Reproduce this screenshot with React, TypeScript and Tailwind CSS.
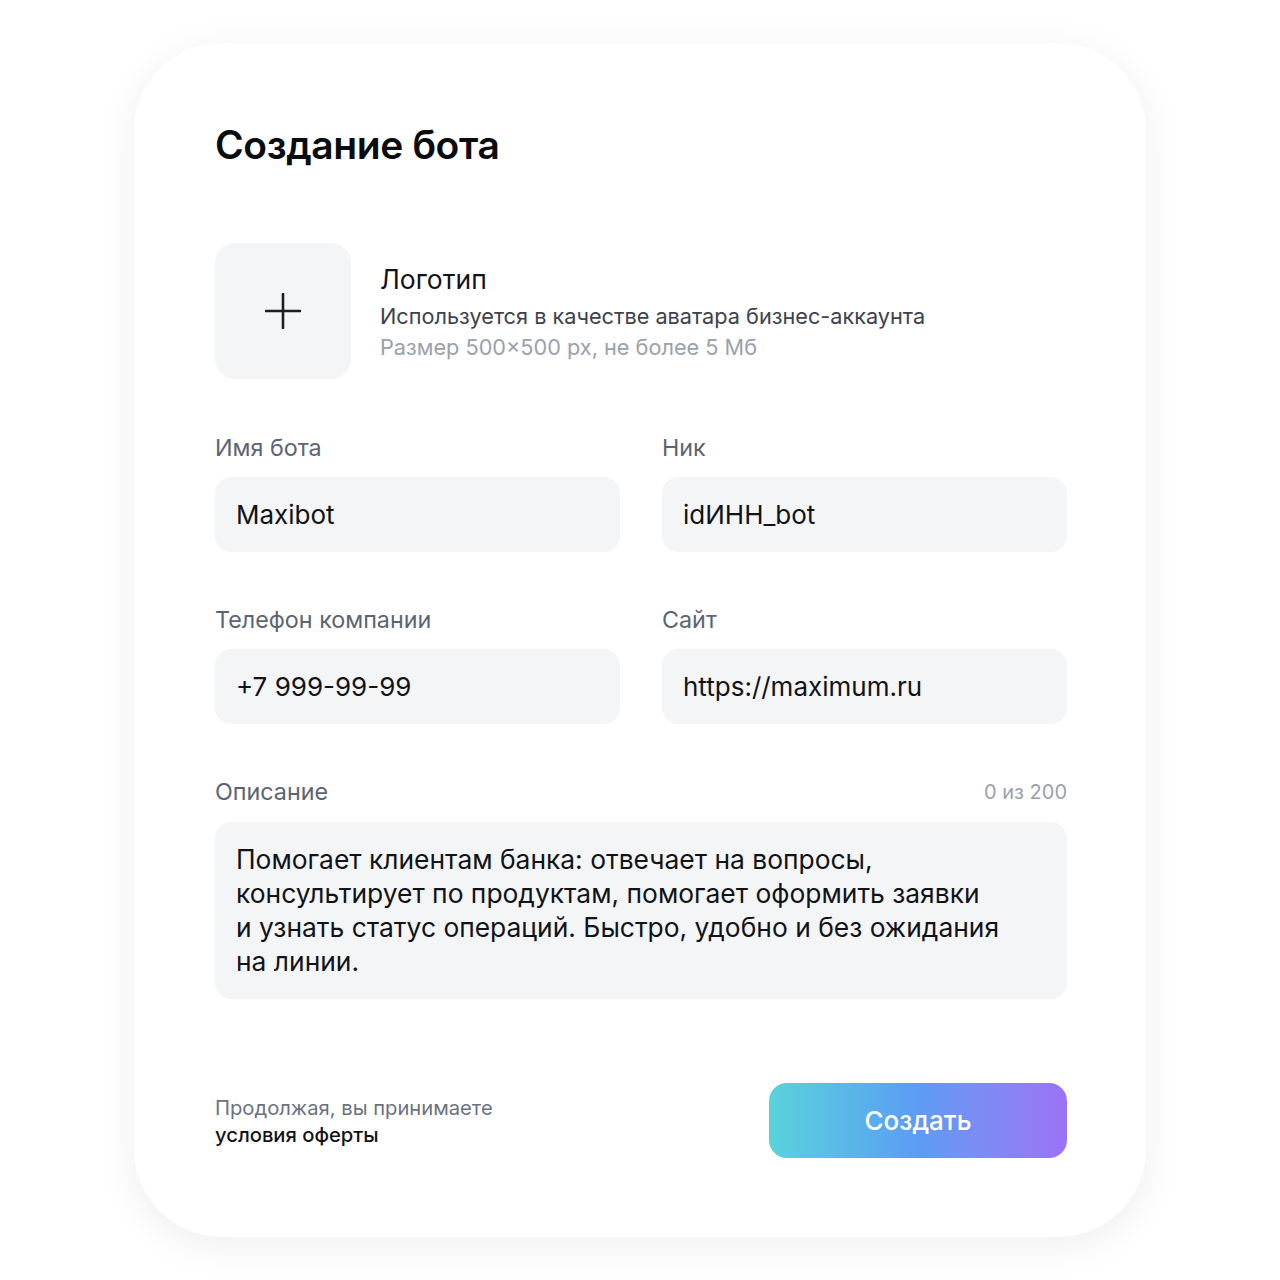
const Field = ({ label, value }: { label: string; value: string }) => (
  <div className="flex flex-col">
    <div className="h-6 text-[23.3px] leading-6 text-[#5b6472]">{label}</div>
    <div className="mt-[17px] flex h-[75px] items-center rounded-[16px] bg-[#f4f5f7] px-[21px] text-[26px] text-[#111318]">
      {value}
    </div>
  </div>
);

const PlusIcon = () => (
  <svg width="36" height="36" viewBox="0 0 36 36" fill="none">
    <path d="M18 1v34M1 18h34" stroke="#1c1e22" strokeWidth="2.6" strokeLinecap="round" />
  </svg>
);

const App = () => {
  return (
    <div className="min-h-[1280px] bg-white pt-[43px] font-['Inter',sans-serif]">
      <div className="mx-auto h-[1194px] w-[1012px] rounded-[88px] bg-white pl-[81px] pr-[79px] pt-[78px] shadow-[0_8px_40px_rgba(0,0,0,0.07)]">
        <h1 className="h-12 text-[39px] font-semibold leading-[48px] tracking-[-0.4px] text-[#0b0c0f]">
          Создание бота
        </h1>

        {/* Logo upload */}
        <div className="mt-[74px] flex items-center gap-[29px]">
          <div className="flex h-[136px] w-[136px] items-center justify-center rounded-[20px] bg-[#f4f5f7]">
            <PlusIcon />
          </div>
          <div className="flex flex-col">
            <div className="text-[26.5px] leading-8 text-[#111318]">Логотип</div>
            <div className="mt-[9px] text-[21.7px] leading-6 text-[#3c424d]">
              Используется в качестве аватара бизнес-аккаунта
            </div>
            <div className="mt-[7px] text-[21.7px] leading-6 text-[#9aa1ac]">
              Размер 500×500 px, не более 5 Мб
            </div>
          </div>
        </div>

        <div className="mt-[57px] grid grid-cols-2 gap-x-[42px] gap-y-[56px]">
          <Field label="Имя бота" value="Maxibot" />
          <Field label="Ник" value="idИНН_bot" />
          <Field label="Телефон компании" value="+7 999-99-99" />
          <Field label="Сайт" value="https://maximum.ru" />
        </div>

        {/* Description */}
        <div className="mt-[56px]">
          <div className="flex h-6 items-center justify-between">
            <span className="text-[23.3px] text-[#5b6472]">Описание</span>
            <span className="text-[20px] text-[#9aa1ac]">0 из 200</span>
          </div>
          <div className="mt-[18px] h-[177px] rounded-[16px] bg-[#f4f5f7] px-[21px] pt-[20px] text-[26.4px] leading-[34px] text-[#111318]">
            Помогает клиентам банка: отвечает на вопросы,
            <br />
            консультирует по продуктам, помогает оформить заявки
            <br />
            и узнать статус операций. Быстро, удобно и без ожидания
            <br />
            на линии.
          </div>
        </div>

        {/* Footer */}
        <div className="mt-[84px] flex items-center justify-between">
          <div className="flex flex-col text-[20.2px] leading-[27px]">
            <span className="text-[#6b7280]">Продолжая, вы принимаете</span>
            <span className="font-medium text-[#111318]">условия оферты</span>
          </div>
          <button className="flex h-[75px] w-[298px] items-center justify-center rounded-[18px] bg-gradient-to-r from-[#5ad3da] via-[#5b9cf4] to-[#9b72f6] text-[26px] font-medium text-white">
            Создать
          </button>
        </div>
      </div>
    </div>
  );
};

export default App;
